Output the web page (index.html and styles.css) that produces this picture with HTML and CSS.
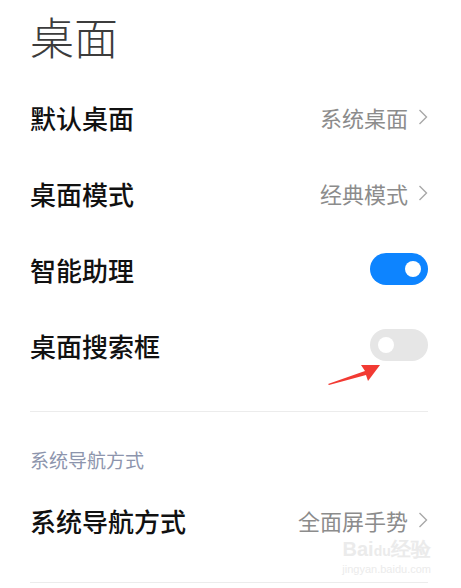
FILE: index.html
```html
<!DOCTYPE html>
<html>
<head>
    <meta charset="UTF-8">
    <meta name="viewport" content="width=device-width, initial-scale=1.0">
    <title>桌面</title>
    <link rel="stylesheet" href="styles.css">
</head>
<body>
    <main class="page">
        <h1 class="title">桌面</h1>

        <div class="list">
            <div class="row">
                <span class="label">默认桌面</span>
                <span class="value">系统桌面<svg class="chevron" viewBox="0 0 10 16"><path d="M1.5 1 L8.5 8 L1.5 15" /></svg></span>
            </div>
            <div class="row">
                <span class="label">桌面模式</span>
                <span class="value">经典模式<svg class="chevron" viewBox="0 0 10 16"><path d="M1.5 1 L8.5 8 L1.5 15" /></svg></span>
            </div>
            <div class="row">
                <span class="label">智能助理</span>
                <span class="switch on"><span class="knob"></span></span>
            </div>
            <div class="row">
                <span class="label">桌面搜索框</span>
                <span class="switch"><span class="knob"></span></span>
                <svg class="arrow" viewBox="0 0 60 24">
                    <path d="M1 22 L38 9 L34 3 L53 3 L41 19 L39 13 L2 23 Z" />
                </svg>
            </div>
        </div>

        <div class="divider"></div>

        <div class="section-title">系统导航方式</div>
        <div class="row">
            <span class="label">系统导航方式</span>
            <span class="value">全面屏手势<svg class="chevron" viewBox="0 0 10 16"><path d="M1.5 1 L8.5 8 L1.5 15" /></svg></span>
        </div>
        <div class="divider bottom"></div>

        <div class="watermark">
            <span class="wm-brand">Bai<span class="wm-paw">du</span>经验</span>
            <span class="wm-url">jingyan.baidu.com</span>
        </div>
    </main>
</body>
</html>
```

FILE: styles.css
```css
body {
    margin: 0;
    background-color: #fff;
    font-family: "Noto Sans CJK SC", "Noto Sans", sans-serif;
}

.page {
    position: relative;
    width: 461px;
    height: 588px;
    padding: 0 33px 0 30px;
    box-sizing: border-box;
    overflow: hidden;
}

.title {
    margin: 0;
    height: 79px;
    padding-top: 6px;
    box-sizing: border-box;
    font-size: 44px;
    line-height: 60px;
    font-weight: 300;
    color: #3c3c3c;
}

.row {
    position: relative;
    display: flex;
    align-items: center;
    justify-content: space-between;
    height: 76px;
}

.label {
    font-size: 26px;
    font-weight: 500;
    color: #111;
}

.value {
    display: flex;
    align-items: center;
    font-size: 22px;
    color: #8c8c8c;
}

.chevron {
    width: 10px;
    height: 16px;
    margin-left: 10px;
    fill: none;
    stroke: #a8a8a8;
    stroke-width: 1.4;
}

.switch {
    display: flex;
    align-items: center;
    width: 58px;
    height: 32px;
    padding: 0 8px;
    box-sizing: border-box;
    border-radius: 16px;
    background-color: #e6e6e6;
}

.switch.on {
    justify-content: flex-end;
    padding: 0 7px;
    background-color: #0d84ff;
}

.knob {
    width: 16px;
    height: 16px;
    border-radius: 50%;
    background-color: #fff;
}

.arrow {
    position: absolute;
    left: 297px;
    top: 55px;
    width: 60px;
    height: 24px;
    fill: #f23a33;
}

.divider {
    height: 1px;
    margin-top: 28px;
    background-color: #ececec;
}

.divider.bottom {
    margin-top: 24px;
}

.section-title {
    height: 70px;
    padding-top: 21px;
    box-sizing: border-box;
    font-size: 19px;
    line-height: 54px;
    color: #8d95ad;
}

.watermark {
    position: absolute;
    right: 30px;
    bottom: 12px;
    display: flex;
    flex-direction: column;
    align-items: center;
    color: #ebebeb;
    font-family: "Liberation Sans", sans-serif;
}

.wm-brand {
    font-size: 20px;
    font-weight: bold;
    line-height: 22px;
}

.wm-paw {
    font-size: 14px;
}

.wm-url {
    font-size: 11px;
    line-height: 14px;
}
```
